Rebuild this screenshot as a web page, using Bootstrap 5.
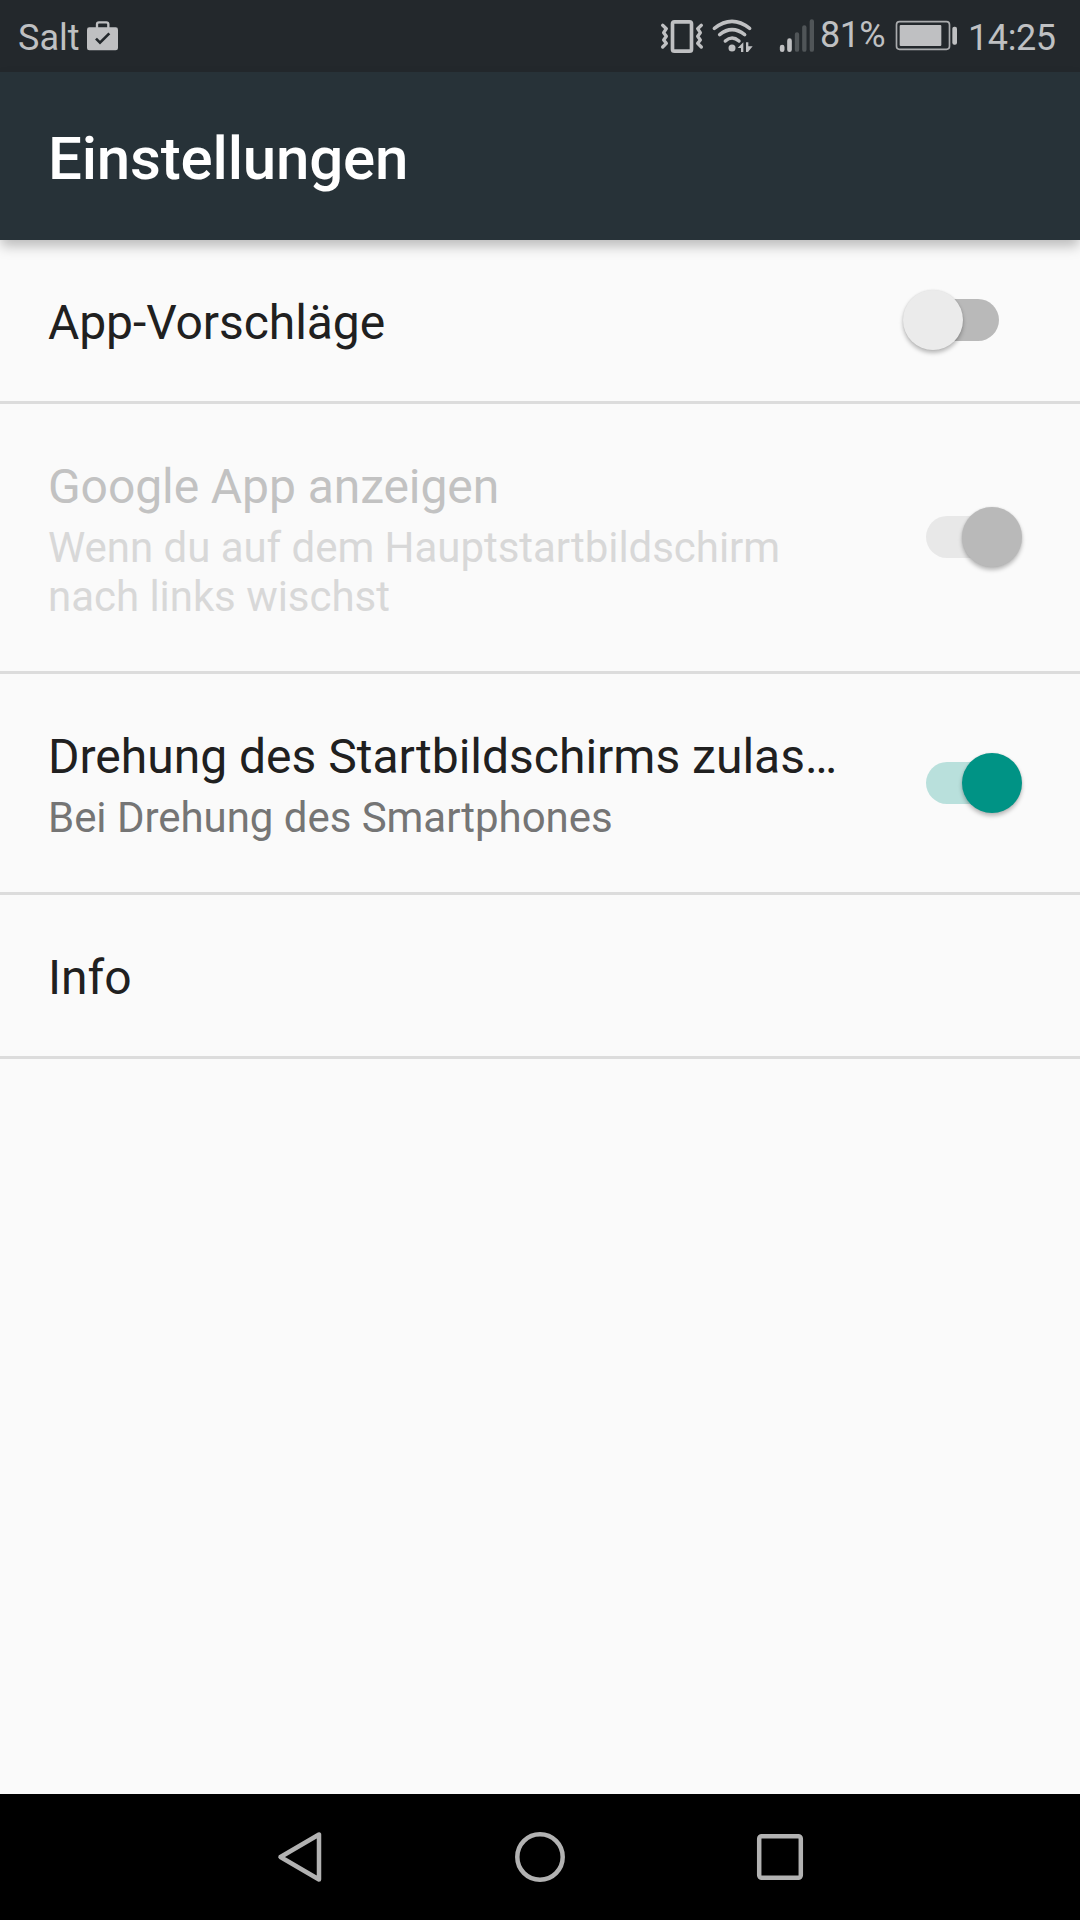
<!DOCTYPE html>
<html lang="de">
<head>
<meta charset="utf-8">
<meta name="viewport" content="width=device-width, initial-scale=1">
<title>Einstellungen</title>
<link rel="stylesheet" href="https://cdn.jsdelivr.net/npm/bootstrap@5.3.0/dist/css/bootstrap.min.css">
<style>
  body { font-family: Roboto, "Noto Sans", sans-serif; background: #fafafa; color: #202020; }
  svg { display: block; flex: none; }
  .screen { height: 1920px; width: 1080px; overflow: hidden; }
  .status { height: 72px; background: #23282c; color: #bfc0c2; font-size: 36px; line-height: 42px; padding-left: 18px; padding-right: 23px; }
  .carrier { padding-top: 17px; }
  .carrier svg { margin-left: 6px; }
  .percent { padding-top: 14px; letter-spacing: -.6px; margin-left: 5px; width: 74.5px; }
  .clock { padding-top: 17px; letter-spacing: -.4px; margin-left: 6.5px; width: 89px; white-space: nowrap; }
  .appbar { height: 168px; background: #273238; color: #fff; padding: 5px 48px 0; box-shadow: 0 7px 12px -1px rgba(0,0,0,.26); z-index: 1; }
  .appbar h1 { font-size: 60px; font-weight: 500; line-height: 70px; letter-spacing: -.17px; }
  .setting { padding: 0 58px 0 48px; border: 0; border-bottom: 3px solid #dcdcdc; background: transparent; color: inherit; }
  .setting-text { width: 800px; padding: 54px 0 50px; }
  .setting-title { font-size: 48px; line-height: 57px; }
  .tight { letter-spacing: -.08px; }
  .setting-note { font-size: 42px; line-height: 49px; margin-top: 8px; color: #757575; letter-spacing: -.04px; }
  .is-off .setting-title { color: #c2c2c2; }
  .is-off .setting-note { color: #d8d8d8; }
  .toggle { width: 96px; height: 60px; margin-bottom: 1px; --track: #b9b9b9; --thumb: #ebebeb; }
  .toggle-track { width: 78px; height: 42px; border-radius: 21px; background: var(--track); }
  .toggle-thumb { z-index: 1; width: 60px; height: 60px; border-radius: 50%; background: var(--thumb); box-shadow: 0 3px 4px rgba(0,0,0,.26), 0 0 2px rgba(0,0,0,.1); }
  .toggle.left { margin-right: 23px; }
  .toggle.left .toggle-track { margin-left: -42px; }
  .toggle.right .toggle-track { margin-right: -42px; }
  .toggle.locked { --track: #e8e8e8; --thumb: #b9b9b9; }
  .toggle.active-on { --track: #b9e0dc; --thumb: #009385; }
  .sysnav { height: 126px; background: #000; padding: 0 180px; }
</style>
</head>
<body>
<div class="screen d-flex flex-column">
  <header class="status d-flex justify-content-between flex-shrink-0">
    <div class="carrier d-flex align-items-start">
      <span>Salt</span>
      <svg width="33" height="35" viewBox="258 51 99 105">
        <path d="M291 85V73q0-6 6-6h22q6 0 6 6v12" fill="none" stroke="#bfc0c2" stroke-width="7"/>
        <rect x="261" y="82" width="93" height="69" rx="7" fill="#bfc0c2"/>
        <path d="M288 116l12 12 28-28" fill="none" stroke="#23282c" stroke-width="8"/>
      </svg>
    </div>
    <div class="d-flex">
      <svg width="165" height="72" viewBox="0 -30 495 216" fill="none" stroke="#bfc0c2" stroke-linecap="round" stroke-linejoin="round">
        <rect x="67.500" y="35.500" width="57" height="88" rx="6" stroke-width="11"/>
        <path d="M38 46l11 10-8 12 8 11-8 11 8 10-11 11" stroke-width="10"/>
        <path d="M154 46l-11 10 8 12-8 11 8 11-8 10 11 11" stroke-width="10"/>
        <path d="M193 55q53-42 106 0M209 74q37-30 75 0M226 93q20-18 41 0" stroke-width="10.500"/>
        <circle cx="246" cy="114" r="10.500" fill="#bfc0c2" stroke="none"/>
        <path d="M263 114l17-17v29h-7v-12zM288 97h7v12h13l-14 17h-6z" fill="#bfc0c2" stroke="none"/>
        <path d="M396.500 111v8M418.500 92v27" stroke-width="14"/>
        <path d="M441 73v46M463 52v67M485.500 34v85" stroke="#505558" stroke-width="13"/>
      </svg>
      <div class="percent">81%</div>
      <svg width="67" height="72" viewBox="254 -30 201 216">
        <rect x="258.500" y="35" width="159" height="83" rx="9" fill="none" stroke="#aaacae" stroke-width="5"/>
        <rect x="268" y="45" width="125" height="63" rx="3" fill="#bfc0c2"/>
        <rect x="426" y="50" width="14" height="54" rx="6" fill="#bfc0c2"/>
      </svg>
      <div class="clock">14:25</div>
    </div>
  </header>

  <div class="appbar d-flex align-items-center flex-shrink-0">
    <h1 class="m-0">Einstellungen</h1>
  </div>

  <main class="list-group rounded-0 flex-grow-1">
    <div class="setting list-group-item rounded-0 d-flex justify-content-between align-items-center">
      <div class="setting-text"><div class="setting-title tight">App-Vorschläge</div></div>
      <div class="toggle left d-flex align-items-center flex-shrink-0" role="switch" aria-checked="false">
        <span class="toggle-thumb flex-shrink-0"></span><span class="toggle-track flex-shrink-0"></span>
      </div>
    </div>
    <div class="setting is-off list-group-item rounded-0 d-flex justify-content-between align-items-center">
      <div class="setting-text">
        <div class="setting-title tight">Google App anzeigen</div>
        <div class="setting-note">Wenn du auf dem Hauptstartbildschirm nach links wischst</div>
      </div>
      <div class="toggle right locked d-flex align-items-center justify-content-end flex-shrink-0" role="switch" aria-checked="true" aria-disabled="true">
        <span class="toggle-track flex-shrink-0"></span><span class="toggle-thumb flex-shrink-0"></span>
      </div>
    </div>
    <div class="setting list-group-item rounded-0 d-flex justify-content-between align-items-center">
      <div class="setting-text">
        <div class="setting-title text-nowrap">Drehung des Startbildschirms zulas…</div>
        <div class="setting-note">Bei Drehung des Smartphones</div>
      </div>
      <div class="toggle right active-on d-flex align-items-center justify-content-end flex-shrink-0" role="switch" aria-checked="true">
        <span class="toggle-track flex-shrink-0"></span><span class="toggle-thumb flex-shrink-0"></span>
      </div>
    </div>
    <div class="setting list-group-item rounded-0 d-flex align-items-center">
      <div class="setting-text"><div class="setting-title">Info</div></div>
    </div>
  </main>

  <nav class="sysnav d-flex flex-shrink-0 align-items-center">
    <div class="col d-flex justify-content-center">
      <svg width="60" height="60" viewBox="0 0 60 60" fill="none" stroke="#b2b2b2" stroke-width="4.500" stroke-linejoin="round"><path d="M49 7.500v45L10.500 30z"/></svg>
    </div>
    <div class="col d-flex justify-content-center">
      <svg width="60" height="60" viewBox="0 0 60 60" fill="none" stroke="#b2b2b2" stroke-width="4.500"><circle cx="30" cy="30" r="22.700"/></svg>
    </div>
    <div class="col d-flex justify-content-center">
      <svg width="60" height="60" viewBox="0 0 60 60" fill="none" stroke="#b2b2b2" stroke-width="4.500"><rect x="9.200" y="9.200" width="41.600" height="41.600" rx="2.500"/></svg>
    </div>
  </nav>
</div>
<script src="https://cdn.jsdelivr.net/npm/bootstrap@5.3.0/dist/js/bootstrap.bundle.min.js"></script>
</body>
</html>
